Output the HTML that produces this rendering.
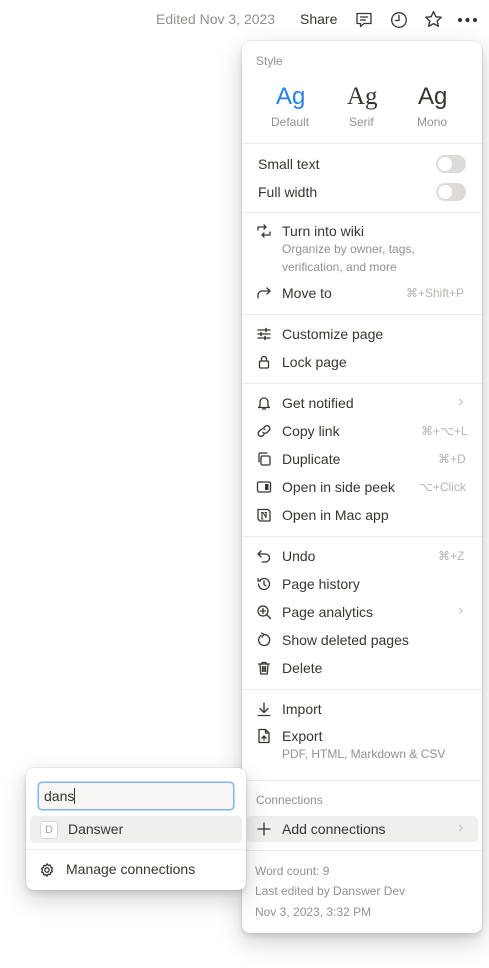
<!DOCTYPE html>
<html><head><meta charset="utf-8">
<style>
*{margin:0;padding:0;box-sizing:border-box}
body{width:489px;height:968px;background:#fff;position:relative;overflow:hidden;font-family:"Liberation Sans",sans-serif;color:#37352f;font-size:14px}
.a{position:absolute;white-space:nowrap;line-height:20px}
.g{color:#91918e;font-size:12px}
.sc{color:#b4b4b0;font-size:12px}
.hr{position:absolute;left:242px;width:240px;height:1px;background:#ebebea}
svg{position:absolute;fill:none;stroke:#37352f;stroke-width:1.3;stroke-linecap:round;stroke-linejoin:round}
.menu{position:absolute;left:242px;top:41px;width:240px;height:892px;background:#fff;border-radius:8px;box-shadow:0 0 0 1px rgba(15,15,15,.05),0 3px 6px rgba(15,15,15,.1),0 9px 24px rgba(15,15,15,.2)}
.pop{position:absolute;left:26px;top:768px;width:220px;height:122px;background:#fff;border-radius:8px;box-shadow:0 0 0 1px rgba(15,15,15,.05),0 3px 6px rgba(15,15,15,.1),0 9px 24px rgba(15,15,15,.2)}
.tg{position:absolute;left:436px;width:30px;height:18px;border-radius:9px;background:#dcdbd8}
.tg::after{content:"";position:absolute;left:2px;top:2px;width:14px;height:14px;border-radius:50%;background:#fff}
.chev{color:#c4c4c0;font-size:16px}
</style></head><body>
<div class="a" style="left:156px;top:9px;color:#91918e;font-size:14px">Edited Nov 3, 2023</div>
<div class="a" style="left:300px;top:9px;font-size:14px">Share</div>
<svg style="left:354px;top:10px" width="20" height="20" viewBox="0 0 20 20"><path d="M3 3.5h14v10H10l-3.5 3v-3H3z"/><path d="M6.5 7h7M6.5 10h5"/></svg>
<svg style="left:389px;top:10px" width="20" height="20" viewBox="0 0 20 20"><circle cx="10" cy="10" r="7.3"/><path d="M10 5.5V10.5H6.5"/></svg>
<svg style="left:423px;top:9px" width="21" height="21" viewBox="0 0 20 20"><path d="M10 2.5l2.2 4.8 5.2.6-3.9 3.5 1.1 5.1L10 13.9l-4.6 2.6 1.1-5.1-3.9-3.5 5.2-.6z"/></svg>
<svg style="left:457px;top:15px;stroke:none;fill:#37352f" width="22" height="10" viewBox="0 0 22 10"><circle cx="3" cy="5" r="2.1"/><circle cx="10.5" cy="5" r="2.1"/><circle cx="18" cy="5" r="2.1"/></svg>

<div class="menu"></div>
<div class="a g" style="left:256px;top:51px">Style</div>
<div class="a" style="left:276px;top:82px;font-size:24px;line-height:30px;color:#2383e2">Ag</div>
<div class="a" style="left:347px;top:82px;font-size:25px;line-height:30px;font-family:'Liberation Serif',serif">Ag</div>
<div class="a" style="left:418px;top:82px;font-size:24px;line-height:30px">Ag</div>
<div class="a g" style="left:271px;top:112px">Default</div>
<div class="a g" style="left:349px;top:112px">Serif</div>
<div class="a g" style="left:417px;top:112px">Mono</div>
<div class="hr" style="top:143px"></div>
<div class="a" style="left:258px;top:154px">Small text</div><div class="tg" style="top:155px"></div>
<div class="a" style="left:258px;top:182px">Full width</div><div class="tg" style="top:183px"></div>
<div class="hr" style="top:212px"></div>

<svg style="left:256px;top:223px" width="16" height="16" viewBox="0 0 16 16"><path d="M2 7V4h8M8 2l2 2-2 2M14 9v3H6M8 10l-2 2 2 2"/></svg>
<div class="a" style="left:282px;top:221px">Turn into wiki</div>
<div class="a g" style="left:282px;top:239px">Organize by owner, tags,</div>
<div class="a g" style="left:282px;top:257px">verification, and more</div>
<svg style="left:256px;top:285px" width="16" height="16" viewBox="0 0 16 16"><path d="M2 13V10a4 4 0 0 1 4-4h8M11 3l3 3-3 3"/></svg>
<div class="a" style="left:282px;top:283px">Move to</div><div class="a sc" style="left:406px;top:283px">⌘+Shift+P</div>
<div class="hr" style="top:314px"></div>

<svg style="left:256px;top:326px" width="16" height="16" viewBox="0 0 16 16"><path d="M2 4h12M2 8h12M2 12h12"/><path d="M10 2.5v3M5 6.5v3M9 10.5v3" stroke-width="1.6"/></svg>
<div class="a" style="left:282px;top:324px">Customize page</div>
<svg style="left:256px;top:354px" width="16" height="16" viewBox="0 0 16 16"><rect x="3.5" y="7" width="9" height="7" rx="1"/><path d="M5.5 7V5a2.5 2.5 0 0 1 5 0v2"/></svg>
<div class="a" style="left:282px;top:352px">Lock page</div>
<div class="hr" style="top:383px"></div>

<svg style="left:256px;top:395px" width="16" height="16" viewBox="0 0 16 16"><path d="M4 11V7a4 4 0 0 1 8 0v4l1.5 1.5h-11zM6.5 14h3"/></svg>
<div class="a" style="left:282px;top:393px">Get notified</div><div class="a chev" style="left:458px;top:392px">›</div>
<svg style="left:256px;top:423px" width="16" height="16" viewBox="0 0 16 16"><path d="M7 9.5a3 3 0 0 0 4 0l2-2a2.8 2.8 0 0 0-4-4L8 4.5M9 6.5a3 3 0 0 0-4 0l-2 2a2.8 2.8 0 0 0 4 4l1-1"/></svg>
<div class="a" style="left:282px;top:421px">Copy link</div><div class="a sc" style="left:421px;top:421px">⌘+⌥+L</div>
<svg style="left:256px;top:451px" width="16" height="16" viewBox="0 0 16 16"><rect x="5" y="5" width="9" height="9" rx="1.5"/><path d="M3 11V3.5A1.5 1.5 0 0 1 4.5 2H11"/></svg>
<div class="a" style="left:282px;top:449px">Duplicate</div><div class="a sc" style="left:438px;top:449px">⌘+D</div>
<svg style="left:256px;top:479px" width="16" height="16" viewBox="0 0 16 16"><rect x="1.5" y="3" width="13" height="10" rx="1.5"/><rect x="9" y="5" width="3.5" height="6" fill="#37352f" stroke="none"/></svg>
<div class="a" style="left:282px;top:477px">Open in side peek</div><div class="a sc" style="left:419px;top:477px">⌥+Click</div>
<svg style="left:256px;top:507px" width="16" height="16" viewBox="0 0 16 16"><path d="M2 2.5h10l2 2V14H4l-2-2z"/><path d="M6 12V5.5h1l3 5V5.5M5.5 5.5h1.5M9 5.5h1.5M5.5 12h1.5" stroke-width="1.1"/></svg>
<div class="a" style="left:282px;top:505px">Open in Mac app</div>
<div class="hr" style="top:536px"></div>

<svg style="left:256px;top:548px" width="16" height="16" viewBox="0 0 16 16"><path d="M5 3L2 6l3 3M2 6h7.5a4 4 0 0 1 0 8H6"/></svg>
<div class="a" style="left:282px;top:546px">Undo</div><div class="a sc" style="left:438px;top:546px">⌘+Z</div>
<svg style="left:256px;top:576px" width="16" height="16" viewBox="0 0 16 16"><path d="M2.5 8a5.5 5.5 0 1 0 1.6-3.9M2 2.5v2.5h2.5M8 5v3.5l2 1.5"/></svg>
<div class="a" style="left:282px;top:574px">Page history</div>
<svg style="left:256px;top:604px" width="16" height="16" viewBox="0 0 16 16"><circle cx="7" cy="7" r="5"/><path d="M10.5 10.5L14.5 14.5M7 4.5v5M4.5 7h5"/></svg>
<div class="a" style="left:282px;top:602px">Page analytics</div><div class="a chev" style="left:458px;top:601px">›</div>
<svg style="left:256px;top:632px" width="16" height="16" viewBox="0 0 16 16"><path d="M5 3.5A5.5 5.5 0 1 0 8 2.5M8 2.5L5.5 1M8 2.5L6 5"/></svg>
<div class="a" style="left:282px;top:630px">Show deleted pages</div>
<svg style="left:256px;top:660px" width="16" height="16" viewBox="0 0 16 16"><path d="M2.5 4h11M6 4V2.5h4V4M4 4l.7 10h6.6L12 4M6.5 6.5v5M8 6.5v5M9.5 6.5v5"/></svg>
<div class="a" style="left:282px;top:658px">Delete</div>
<div class="hr" style="top:689px"></div>

<svg style="left:256px;top:701px" width="16" height="16" viewBox="0 0 16 16"><path d="M8 2v9M4 7.5l4 4 4-4M2.5 14.5h11"/></svg>
<div class="a" style="left:282px;top:699px">Import</div>
<svg style="left:256px;top:728px" width="16" height="16" viewBox="0 0 16 16"><path d="M3 1.5h6.5l3.5 3.5v9.5H3z M9.5 1.5V5H13M8 12V8M6 10l2-2 2 2"/></svg>
<div class="a" style="left:282px;top:726px">Export</div>
<div class="a g" style="left:282px;top:744px">PDF, HTML, Markdown &amp; CSV</div>
<div class="hr" style="top:780px"></div>
<div class="a g" style="left:256px;top:790px">Connections</div>
<div style="position:absolute;left:247px;top:816px;width:231px;height:26px;background:#efefee;border-radius:4px"></div>
<svg style="left:256px;top:821px" width="16" height="16" viewBox="0 0 16 16"><path d="M8 2v12M2 8h12"/></svg>
<div class="a" style="left:282px;top:819px">Add connections</div><div class="a chev" style="left:458px;top:818px">›</div>
<div class="hr" style="top:850px"></div>
<div class="a g" style="left:255px;top:861px">Word count: 9</div>
<div class="a g" style="left:255px;top:881px">Last edited by Danswer Dev</div>
<div class="a g" style="left:255px;top:902px">Nov 3, 2023, 3:32 PM</div>

<div class="pop"></div>
<div style="position:absolute;left:38px;top:782px;width:196px;height:28px;border:1px solid #7fb2e8;box-shadow:0 0 0 1px #c4dcf5;border-radius:4px;background:#f7f6f3"></div>
<div class="a" style="left:44px;top:786px">dans<span style="display:inline-block;width:1px;height:16px;background:#37352f;vertical-align:-3px"></span></div>
<div style="position:absolute;left:30px;top:816px;width:212px;height:27px;background:#efefee;border-radius:4px"></div>
<div style="position:absolute;left:40px;top:821px;width:18px;height:18px;border:1px solid #d9d9d7;border-radius:3px;background:#fff;color:#a5a5a2;font-size:11px;text-align:center;line-height:16px">D</div>
<div class="a" style="left:68px;top:819px">Danswer</div>
<div style="position:absolute;left:26px;top:849px;width:220px;height:1px;background:#ebebea"></div>
<svg style="left:39px;top:862px" width="16" height="16" viewBox="0 0 16 16"><circle cx="8" cy="8" r="2.2"/><path d="M8 1.8l1.2 1.6 2-.4.4 2 1.8.9-.8 1.9.8 1.9-1.8.9-.4 2-2-.4L8 14.2l-1.2-1.6-2 .4-.4-2-1.8-.9.8-1.9-.8-1.9 1.8-.9.4-2 2 .4z"/></svg>
<div class="a" style="left:66px;top:859px">Manage connections</div>
</body></html>
